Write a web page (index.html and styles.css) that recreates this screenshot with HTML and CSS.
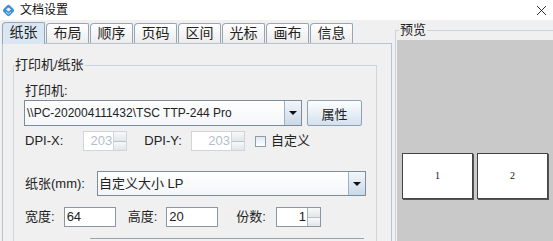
FILE: index.html
```html
<!DOCTYPE html>
<html lang="zh-CN">
<head>
    <meta charset="UTF-8" />
    <title>文档设置</title>
    <link rel="stylesheet" href="styles.css">
</head>
<body>
    <div class="window">
        <div class="titlebar">
            <svg class="app-icon" width="13" height="13" viewBox="0 0 13 13">
                <rect x="2" y="2" width="9" height="9" rx="2" transform="rotate(45 6.5 6.5)" fill="#3d8fdc"/>
                <path d="M4 5.5 L6.5 3.5 L9 5.5 L6.5 7.5 Z" fill="#e8f4ff"/>
                <path d="M4 8 L6.5 10 L9 8" fill="none" stroke="#bfe0ff" stroke-width="1"/>
            </svg>
            <span class="title">文档设置</span>
            <svg class="close" width="11" height="11" viewBox="0 0 11 11">
                <path d="M1 1 L10 10 M10 1 L1 10" stroke="#333" stroke-width="1"/>
            </svg>
        </div>

        <div class="main">
            <div class="left">
                <div class="tabs">
                    <div class="tab active">纸张</div>
                    <div class="tab">布局</div>
                    <div class="tab">顺序</div>
                    <div class="tab">页码</div>
                    <div class="tab">区间</div>
                    <div class="tab">光标</div>
                    <div class="tab">画布</div>
                    <div class="tab">信息</div>
                </div>

                <div class="tab-panel">
                    <fieldset class="group">
                        <legend>打印机/纸张</legend>

                        <div class="field-label">打印机:</div>
                        <div class="row printer-row">
                            <div class="combo printer-combo">
                                <span class="combo-text latin">\\PC-202004111432\TSC TTP-244 Pro</span>
                                <span class="combo-arrow"></span>
                            </div>
                            <button class="button">属性</button>
                        </div>

                        <div class="row dpi-row">
                            <span class="label">DPI-X:</span>
                            <div class="spinner disabled dpi-x">
                                <span class="spin-value">203</span>
                                <span class="spin-buttons"><i></i><i></i></span>
                            </div>
                            <span class="label dpi-y-label">DPI-Y:</span>
                            <div class="spinner disabled dpi-y">
                                <span class="spin-value">203</span>
                                <span class="spin-buttons"><i></i><i></i></span>
                            </div>
                            <span class="checkbox"></span>
                            <span class="label">自定义</span>
                        </div>

                        <div class="row paper-row">
                            <span class="label paper-label">纸张(mm):</span>
                            <div class="combo paper-combo">
                                <span class="combo-text">自定义大小 LP</span>
                                <span class="combo-arrow"></span>
                            </div>
                        </div>

                        <div class="row size-row">
                            <span class="label size-label">宽度:</span>
                            <div class="text-input width-input">64</div>
                            <span class="label height-label">高度:</span>
                            <div class="text-input height-input">20</div>
                            <span class="label copies-label">份数:</span>
                            <div class="spinner copies">
                                <span class="spin-value">1</span>
                                <span class="spin-buttons"><i></i><i></i></span>
                            </div>
                        </div>

                        <div class="next-box"></div>
                    </fieldset>
                </div>
            </div>

            <div class="preview">
                <fieldset class="preview-group">
                    <legend>预览</legend>
                    <div class="canvas">
                        <div class="page">1</div>
                        <div class="page">2</div>
                    </div>
                </fieldset>
            </div>
        </div>
    </div>
</body>
</html>
```

FILE: styles.css
```css
* {
    box-sizing: border-box;
}

html, body {
    margin: 0;
    padding: 0;
    width: 553px;
    height: 241px;
    overflow: hidden;
    background: #f0f0f0;
    font-family: "Liberation Sans", "Noto Sans CJK SC", sans-serif;
    font-size: 13px;
    color: #222;
}

.window {
    display: flex;
    flex-direction: column;
    height: 100%;
}

.titlebar {
    flex-shrink: 0;
    height: 20px;
    background: #ffffff;
    display: flex;
    align-items: center;
    padding-left: 2px;
}

.app-icon {
    display: block;
}

.title {
    margin-left: 5px;
    font-size: 12px;
    line-height: 14px;
    color: #111;
}

.close {
    margin-left: auto;
    margin-right: 6px;
}

.main {
    display: flex;
    flex: 1;
    min-height: 0;
    overflow: hidden;
}

.left {
    width: 392px;
    display: flex;
    flex-direction: column;
    min-height: 0;
}

.tabs {
    flex-shrink: 0;
    height: 23px;
    display: flex;
    align-items: flex-end;
    gap: 1px;
    padding-left: 2px;
}

.tab {
    width: 43px;
    height: 20px;
    border: 1px solid #97a6b6;
    border-bottom: none;
    border-radius: 4px 2px 0 0;
    background: linear-gradient(#ffffff, #ececec);
    font-size: 14px;
    line-height: 18px;
    text-align: center;
    color: #222;
}

.tab.active {
    height: 22px;
    margin-bottom: -1px;
    background: #d9e7f4;
    position: relative;
    z-index: 1;
}

.tab-panel {
    flex: 1;
    min-height: 0;
    overflow: hidden;
    margin-left: 2px;
    border: 1px solid #b7c4d1;
    border-bottom: none;
    padding: 13px 14px 0 10px;
}

.group {
    margin: 0;
    border: 1px solid #cdd5de;
    padding: 10px 10px 0 10px;
    height: 200px;
}

.group legend {
    margin-left: -10px;
    padding: 0 1px;
    line-height: 16px;
    font-size: 13px;
}

.field-label {
    line-height: 16px;
    padding-left: 1px;
}

.row {
    display: flex;
    align-items: center;
}

.label {
    line-height: 16px;
    padding-left: 1px;
    white-space: nowrap;
}

.printer-row {
    margin-top: 1px;
    height: 26px;
}

.combo {
    height: 100%;
    display: flex;
    border: 1px solid #7d8c9b;
    background: linear-gradient(#ffffff, #f3f6f9);
}

.combo-text {
    flex: 1;
    padding-left: 2px;
    line-height: 24px;
    color: #222;
    white-space: nowrap;
    overflow: hidden;
}

.combo-text.latin {
    font-size: 12px;
}

.combo-arrow {
    width: 17px;
    border-left: 1px solid #9fb0c1;
    background: linear-gradient(#f2f6fa, #c9d9e9);
    display: flex;
    align-items: center;
    justify-content: center;
}

.combo-arrow::after {
    content: "";
    border-left: 4px solid transparent;
    border-right: 4px solid transparent;
    border-top: 4px solid #111;
}

.printer-combo {
    width: 278px;
}

.button {
    margin-left: 5px;
    width: 55px;
    height: 26px;
    border: 1px solid #8ea2b6;
    border-radius: 2px;
    background: linear-gradient(#fdfeff, #d3e0ed);
    font-family: "Noto Sans CJK SC", sans-serif;
    font-size: 13px;
    color: #222;
    padding: 0;
}

.dpi-row {
    margin-top: 5px;
    height: 20px;
}

.spinner {
    height: 20px;
    display: flex;
    border: 1px solid #8797a7;
    background: #ffffff;
}

.spin-value {
    flex: 1;
    text-align: right;
    padding-right: 1px;
    line-height: 18px;
}

.spin-buttons {
    width: 13px;
    display: flex;
    flex-direction: column;
    border-left: 1px solid #a6b4c2;
}

.spin-buttons i {
    flex: 1;
    background: linear-gradient(#f8f8f8, #e2e6ea);
    border-bottom: 1px solid #b9c3cd;
}

.spin-buttons i:last-child {
    border-bottom: none;
}

.spinner.disabled {
    border-color: #cfd5db;
}

.spinner.disabled .spin-value {
    color: #b3bec8;
}

.spinner.disabled .spin-buttons {
    border-left-color: #d0d6dc;
}

.dpi-x {
    margin-left: 20px;
    width: 44px;
}

.dpi-y-label {
    margin-left: 16px;
}

.dpi-y {
    margin-left: 9px;
    width: 54px;
}

.checkbox {
    margin-left: 10px;
    width: 11px;
    height: 11px;
    border: 1px solid #8d9cab;
    background: linear-gradient(#dfe8f1, #ffffff);
    margin-right: 4px;
}

.paper-row {
    margin-top: 20px;
    height: 25px;
}

.paper-combo {
    margin-left: 12px;
    width: 269px;
}

.paper-combo .combo-text {
    padding-left: 1px;
}

.size-row {
    margin-top: 11px;
    height: 20px;
}

.text-input {
    height: 20px;
    border: 1px solid #8797a7;
    background: #ffffff;
    line-height: 18px;
    padding-left: 2px;
}

.width-input {
    margin-left: 9px;
    width: 52px;
}

.height-label {
    margin-left: 11px;
}

.height-input {
    margin-left: 9px;
    width: 52px;
}

.copies-label {
    margin-left: 17px;
}

.copies {
    margin-left: 10px;
    width: 45px;
}

.next-box {
    margin-top: 11px;
    margin-left: 66px;
    width: 274px;
    height: 20px;
    border-top: 1px solid #9aa3ac;
}

.preview {
    flex: 1;
    padding-top: 2px;
    min-height: 0;
    overflow: hidden;
}

.preview-group {
    margin: 0 0 0 3px;
    height: 219px;
    border: 1px solid #c9d3dd;
    border-right: none;
    border-bottom: none;
    padding: 2px 0 0 1px;
}

.preview-group legend {
    margin-left: 2px;
    padding: 0 1px;
    line-height: 16px;
    font-size: 13px;
}

.canvas {
    height: 201px;
    background: #c9c9c9;
    display: flex;
    gap: 4px;
    padding: 113px 0 0 5px;
}

.page {
    width: 71px;
    height: 46px;
    background: #ffffff;
    border: 1px solid #444;
    box-shadow: 1px 1px 0 #555;
    font-family: "Liberation Serif", serif;
    font-size: 10px;
    line-height: 44px;
    text-align: center;
    color: #111;
}
```
